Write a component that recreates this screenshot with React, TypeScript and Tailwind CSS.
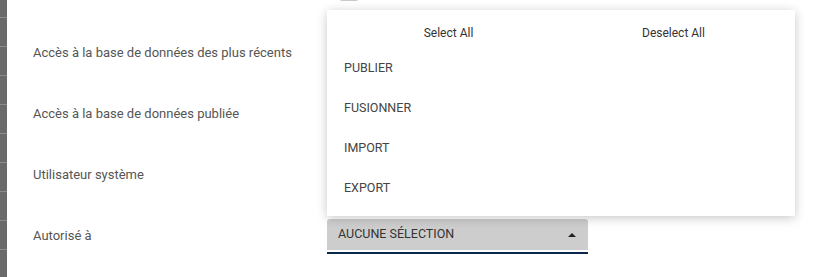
import React from "react";

const rows = [
  "Accès à la base de données des plus récents",
  "Accès à la base de données publiée",
  "Utilisateur système",
];

const options = ["PUBLIER", "FUSIONNER", "IMPORT", "EXPORT"];

function SideStrip() {
  return (
    <div className="w-[7px] shrink-0 overflow-hidden bg-[#6a6a6a]">
      <div className="-mt-[11px] flex flex-col">
        {Array.from({ length: 11 }).map((_, i) => (
          <div key={i} className="h-[29px] border-b border-[#8c8c8c]" />
        ))}
      </div>
    </div>
  );
}

function OptionsMenu() {
  return (
    <div className="absolute left-[327px] top-[10px] w-[468px] h-[206px] bg-white shadow-[0_2px_10px_rgba(0,0,0,0.22)]">
      <div className="grid h-[38px] grid-cols-2 px-[9px] pt-[15px] text-[12px] leading-[16px] text-[#333]">
        <div className="text-center">Select All</div>
        <div className="text-center">Deselect All</div>
      </div>
      {options.map((o) => (
        <div key={o} className="flex h-[40px] items-center pl-[17px] text-[12.5px] text-[#444]">
          {o}
        </div>
      ))}
    </div>
  );
}

export default function App() {
  return (
    <div
      className="relative flex h-[277px] w-[817px] overflow-hidden bg-white"
      style={{ fontFamily: "Roboto, 'Noto Sans', sans-serif" }}
    >
      <SideStrip />
      <div className="flex-1">
        <div className="-mt-[39px] flex flex-col">
          <div className="flex h-[61px] items-center">
            <div className="w-[320px] pl-[26px] text-[13px] text-[#555]">Administrateur principal</div>
            <div className="ml-[13px] h-[18px] w-[18px] rounded-[2px] border-2 border-[#c9c9c9]" />
          </div>
          {rows.map((r) => (
            <div key={r} className="flex h-[61px] items-center">
              <div className="w-[320px] pl-[26px] text-[13px] text-[#555]">{r}</div>
            </div>
          ))}
          <div className="flex h-[61px] items-center">
            <div className="w-[320px] pl-[26px] text-[13px] text-[#555]">Autorisé à</div>
            <div className="mt-[2px] flex w-[261px] flex-col">
              <div className="flex h-[31px] items-center justify-between rounded-t-[3px] bg-[#cdcdcd] pl-[11px] pr-[12px]">
                <span className="text-[12.5px] text-[#333]">AUCUNE SÉLECTION</span>
                <span className="h-0 w-0 border-x-[4px] border-b-[4px] border-x-transparent border-b-[#222]" />
              </div>
              <div className="mt-[2px] h-[2px] bg-[#0b2a4b]" />
            </div>
          </div>
        </div>
      </div>
      <OptionsMenu />
    </div>
  );
}
